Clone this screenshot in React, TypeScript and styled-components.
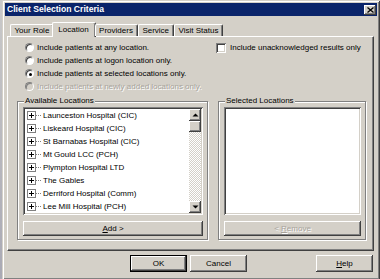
import React from 'react';
import styled, { createGlobalStyle, css } from 'styled-components';

const FACE = '#d4d0c8';
const SHADOW = '#808080';
const DARK = '#404040';

const Global = createGlobalStyle`
  html, body { margin: 0; padding: 0; background: #b8b8b8; }
  body { font-family: "Liberation Sans", Arial, sans-serif; font-size: 8px; color: #000; }
  * { box-sizing: border-box; }
`;

const Screen = styled.div`
  width: 380px;
  height: 279px;
  overflow: hidden;
  display: flex;
  padding-left: 2px;
  background: linear-gradient(#c9c9c9, #a9a9b4);
`;

const Dialog = styled.div`
  width: 378px;
  height: 280px;
  flex: none;
  background: ${FACE};
  display: flex;
  flex-direction: column;
  padding: 3px 3px 0 3px;
  box-shadow: inset 1px 1px ${FACE}, inset -1px -1px ${DARK}, inset 2px 2px #fff, inset -2px -2px ${SHADOW};
`;

const TitleBar = styled.div`
  height: 13px;
  flex: none;
  background: #0a246a;
  color: #fff;
  display: flex;
  align-items: center;
  justify-content: space-between;
  padding: 0 1px 0 2px;
`;

const TitleText = styled.span`
  font-weight: bold;
  font-size: 8.6px;
  line-height: 13px;
`;

const raised = css`
  background: ${FACE};
  box-shadow: inset -1px -1px ${DARK}, inset 1px 1px #fff, inset -2px -2px ${SHADOW}, inset 2px 2px ${FACE};
`;

const sunken = css`
  box-shadow: inset 1px 1px ${SHADOW}, inset -1px -1px #fff, inset 2px 2px ${DARK}, inset -2px -2px ${FACE};
`;

const CloseButton = styled.div`
  ${raised};
  width: 12px;
  height: 10px;
  display: flex;
  align-items: center;
  justify-content: center;
`;

const Body = styled.div`
  flex: 1;
  display: flex;
  flex-direction: column;
  padding: 6px 3px 0 2px;
`;

const TabStrip = styled.div`
  height: 14px;
  flex: none;
  display: flex;
  align-items: flex-end;
  padding-left: 3px;
  position: relative;
  z-index: 1;
`;

const Tab = styled.div<{ $active?: boolean }>`
  flex: none;
  background: ${FACE};
  border-top: 1px solid #fff;
  border-left: 1px solid #fff;
  border-right: 1px solid ${DARK};
  box-shadow: inset -1px 0 ${SHADOW};
  border-radius: 2px 2px 0 0;
  white-space: nowrap;
  ${(p) =>
    p.$active
      ? css`
          height: 15px;
          margin: 0 -1px -1px -2px;
          padding: 1px 6px 0 5px;
          line-height: 11px;
        `
      : css`
          height: 12px;
          padding: 0 4px 0 3.5px;
          line-height: 11px;
        `}
`;

const Panel = styled.div`
  height: 215px;
  flex: none;
  display: flex;
  flex-direction: column;
  border-top: 1px solid #fff;
  border-left: 1px solid #fff;
  border-right: 1px solid ${DARK};
  border-bottom: 1px solid ${DARK};
  box-shadow: inset -1px -1px ${SHADOW};
  padding: 4px 7px 10px 9px;
`;

const OptionsRow = styled.div`
  display: flex;
  justify-content: space-between;
  padding-left: 8px;
`;

const RadioColumn = styled.div`
  display: flex;
  flex-direction: column;
`;

const OptionLine = styled.label<{ $disabled?: boolean }>`
  display: flex;
  align-items: center;
  height: 13px;
  gap: 3px;
  white-space: nowrap;
  color: ${(p) => (p.$disabled ? '#a8a49c' : '#000')};
  text-shadow: ${(p) => (p.$disabled ? '1px 1px #fff' : 'none')};
`;

const RadioDot = styled.span<{ $checked?: boolean; $disabled?: boolean }>`
  width: 9px;
  height: 9px;
  flex: none;
  border-radius: 50%;
  background: ${(p) => (p.$disabled ? FACE : '#fff')};
  border: 1px solid;
  border-color: ${SHADOW} #fff #fff ${SHADOW};
  box-shadow: inset 1px 1px ${(p) => (p.$disabled ? SHADOW : DARK)};
  display: flex;
  align-items: center;
  justify-content: center;
  &::after {
    content: '';
    width: 3px;
    height: 3px;
    border-radius: 50%;
    background: #000;
    display: ${(p) => (p.$checked ? 'block' : 'none')};
    margin: 1px 0 0 1px;
  }
`;

const CheckLine = styled.label`
  display: flex;
  align-items: center;
  gap: 4px;
  height: 13px;
  white-space: nowrap;
  width: 150px;
`;

const CheckBox = styled.span`
  width: 10px;
  height: 10px;
  flex: none;
  background: #fff;
  ${sunken};
`;

const Groups = styled.div`
  margin-top: 8px;
  flex: 1;
  display: grid;
  grid-template-columns: 191px 1fr;
  column-gap: 10px;
`;

const GroupBox = styled.div`
  position: relative;
  border: 1px solid ${SHADOW};
  box-shadow: inset 1px 1px #fff, 1px 1px #fff;
  display: flex;
  flex-direction: column;
  padding: 5px 4px 3px 5px;
`;

const Caption = styled.span`
  position: absolute;
  top: -6px;
  left: 6px;
  padding: 0 1px;
  background: ${FACE};
  line-height: 10px;
  white-space: nowrap;
`;

const ListBox = styled.div`
  height: 108px;
  flex: none;
  background: #fff;
  ${sunken};
  padding: 2px;
  display: flex;
  overflow: hidden;
`;

const ListItems = styled.div`
  flex: 1;
  overflow: hidden;
`;

const ItemRow = styled.div`
  height: 13px;
  display: flex;
  align-items: center;
  padding-left: 2px;
  white-space: nowrap;
`;

const PlusBox = styled.span`
  width: 9px;
  height: 9px;
  flex: none;
  border: 1px solid ${SHADOW};
  background: #fff;
  display: flex;
  align-items: center;
  justify-content: center;
`;

const Connector = styled.span`
  width: 5px;
  flex: none;
  border-top: 1px dotted ${SHADOW};
  margin-right: 2px;
`;

const ScrollBar = styled.div`
  width: 12px;
  flex: none;
  display: flex;
  flex-direction: column;
  background-color: #f4f3f1;
  background-image: repeating-conic-gradient(${FACE} 0 25%, #fff 0 50%);
  background-size: 2px 2px;
`;

const ScrollButton = styled.div`
  ${raised};
  height: 12px;
  flex: none;
  display: flex;
  align-items: center;
  justify-content: center;
`;

const Thumb = styled.div`
  ${raised};
  height: 11px;
  flex: none;
`;

const Track = styled.div`
  flex: 1;
`;

const PushButton = styled.button<{ $default?: boolean; $width?: number; $height?: number }>`
  font: inherit;
  color: #000;
  padding: 0;
  margin: 0;
  border: ${(p) => (p.$default ? '1px solid #000' : 'none')};
  ${raised};
  height: ${(p) => p.$height ?? 15}px;
  width: ${(p) => (p.$width ? `${p.$width}px` : 'auto')};
  display: flex;
  align-items: center;
  justify-content: center;
  line-height: 10px;
  &:disabled {
    color: #a8a49c;
    text-shadow: 1px 1px #fff;
  }
`;

const GroupButton = styled(PushButton)`
  margin-top: 6px;
  width: 100%;
`;

const Footer = styled.div`
  display: flex;
  justify-content: flex-end;
  padding: 4px 1px 0 0;
  gap: 3px;
`;

const Spacer = styled.div`
  width: 63px;
`;

const Key = styled.span`
  text-decoration: underline;
  text-underline-offset: 1px;
`;

const locations = [
  'Launceston Hospital (CIC)',
  'Liskeard Hospital (CIC)',
  'St Barnabas Hospital (CIC)',
  'Mt Gould LCC (PCH)',
  'Plympton Hospital LTD',
  'The Gables',
  'Derriford Hospital (Comm)',
  'Lee Mill Hospital (PCH)',
  'Scott Hospital (PCH)',
];

const tabs = ['Your Role', 'Location', 'Providers', 'Service', 'Visit Status'];

const PlusIcon = () => (
  <svg width="7" height="7" viewBox="0 0 7 7">
    <path d="M1 3.5h5M3.5 1v5" stroke="#000" strokeWidth="1" />
  </svg>
);

const Arrow = ({ down }: { down?: boolean }) => (
  <svg width="7" height="4" viewBox="0 0 7 4">
    <path d={down ? 'M0.5 0.5h6L3.5 3.5z' : 'M0.5 3.5h6L3.5 0.5z'} fill="#000" />
  </svg>
);

export default function App() {
  return (
    <>
      <Global />
      <Screen>
        <Dialog>
          <TitleBar>
            <TitleText>Client Selection Criteria</TitleText>
            <CloseButton>
              <svg width="7" height="6" viewBox="0 0 7 6">
                <path d="M0.5 0.5l6 5M6.5 0.5l-6 5" stroke="#000" strokeWidth="1.3" />
              </svg>
            </CloseButton>
          </TitleBar>
          <Body>
            <TabStrip>
              {tabs.map((t) => (
                <Tab key={t} $active={t === 'Location'}>
                  {t}
                </Tab>
              ))}
            </TabStrip>
            <Panel>
              <OptionsRow>
                <RadioColumn>
                  <OptionLine>
                    <RadioDot />
                    Include patients at any location.
                  </OptionLine>
                  <OptionLine>
                    <RadioDot />
                    Include patients at logon location only.
                  </OptionLine>
                  <OptionLine>
                    <RadioDot $checked />
                    Include patients at selected locations only.
                  </OptionLine>
                  <OptionLine $disabled>
                    <RadioDot $disabled />
                    Include patients at newly added locations only.
                  </OptionLine>
                </RadioColumn>
                <CheckLine>
                  <CheckBox />
                  Include unacknowledged results only
                </CheckLine>
              </OptionsRow>
              <Groups>
                <GroupBox>
                  <Caption>Available Locations</Caption>
                  <ListBox>
                    <ListItems>
                      {locations.map((l) => (
                        <ItemRow key={l}>
                          <PlusBox>
                            <PlusIcon />
                          </PlusBox>
                          <Connector />
                          {l}
                        </ItemRow>
                      ))}
                    </ListItems>
                    <ScrollBar>
                      <ScrollButton>
                        <Arrow />
                      </ScrollButton>
                      <Thumb />
                      <Track />
                      <ScrollButton>
                        <Arrow down />
                      </ScrollButton>
                    </ScrollBar>
                  </ListBox>
                  <GroupButton>
                    <Key>A</Key>dd &gt;
                  </GroupButton>
                </GroupBox>
                <GroupBox>
                  <Caption>Selected Locations</Caption>
                  <ListBox />
                  <GroupButton disabled>
                    &lt;&nbsp;<Key>R</Key>emove
                  </GroupButton>
                </GroupBox>
              </Groups>
            </Panel>
            <Footer>
              <PushButton $default $width={57} $height={17}>
                OK
              </PushButton>
              <PushButton $width={57} $height={17}>
                Cancel
              </PushButton>
              <Spacer />
              <PushButton $width={57} $height={17}>
                <Key>H</Key>elp
              </PushButton>
            </Footer>
          </Body>
        </Dialog>
      </Screen>
    </>
  );
}
